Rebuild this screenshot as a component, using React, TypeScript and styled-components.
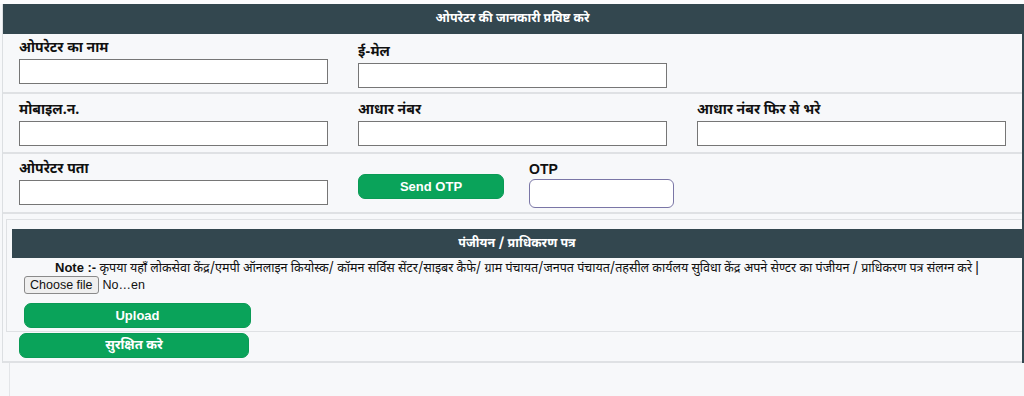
import React from "react";
import styled, { createGlobalStyle } from "styled-components";

const Global = createGlobalStyle`
  html, body { margin: 0; padding: 0; }
  body {
    background: #f7f8fa;
    font-family: "Noto Sans Devanagari", "Liberation Sans", "Noto Sans", sans-serif;
    color: #111;
  }
`;

const Page = styled.div`
  border-top: 4px solid #fcfcfd;
  min-height: 392px;
  display: flex;
  flex-direction: column;
`;

const Wrapper = styled.div`
  margin-left: 2px;
  border-left: 1px solid #dcdfe2;
  border-right: 2px solid #33474f;
  box-sizing: border-box;
  width: 1022px;
`;

const Header = styled.div<{ $h?: number }>`
  height: ${(p) => p.$h ?? 30}px;
  background: #33474f;
  color: #fff;
  font-weight: 700;
  font-size: 12.5px;
  display: flex;
  align-items: center;
  justify-content: center;
`;

const Row = styled.div<{ $cols?: string }>`
  display: grid;
  grid-template-columns: ${(p) => p.$cols ?? "339px 339px 1fr"};
  align-items: start;
  padding: 5px 0 8px 16px;
  border-bottom: 2px solid #dfe1e4;
`;

const Field = styled.div<{ $shift?: number }>`
  display: flex;
  flex-direction: column;
  padding-top: ${(p) => p.$shift ?? 0}px;
  margin-bottom: ${(p) => -(p.$shift ?? 0)}px;
`;

const Label = styled.label<{ $latin?: boolean }>`
  font-size: 14px;
  font-weight: 700;
  line-height: 20px;
  font-family: ${(p) =>
    p.$latin
      ? `"Liberation Sans", Arial, sans-serif`
      : `"Noto Sans Devanagari", "Liberation Sans", sans-serif`};
  color: #111;
`;

const TextInput = styled.input`
  width: 309px;
  height: 25px;
  box-sizing: border-box;
  border: 1px solid #767676;
  background: #fff;
  margin: 0;
  padding: 2px 4px;
`;

const OtpInput = styled.input`
  width: 145px;
  height: 29px;
  box-sizing: border-box;
  border: 1px solid #7a76a6;
  border-radius: 6px;
  background: #fff;
  margin: 0 0 -4px 0;
`;

const GreenButton = styled.button<{ $w: number; $mt?: number }>`
  width: ${(p) => p.$w}px;
  height: 25px;
  margin-top: ${(p) => p.$mt ?? 0}px;
  background: #0aa35a;
  color: #fff;
  border: 1px solid #0a9a55;
  border-radius: 7px;
  font-family: "Liberation Sans", "Noto Sans Devanagari", Arial, sans-serif;
  font-weight: 700;
  font-size: 13px;
  cursor: pointer;
  padding: 0;
`;

const Section = styled.div`
  padding: 5px 0 3px 3px;
  border-bottom: 2px solid #dfe1e4;
  display: flex;
  flex-direction: column;
  align-items: flex-start;
`;

const Box = styled.div`
  align-self: stretch;
  border: 1px solid #dfe1e4;
  border-right: none;
  padding: 9px 0 3px 5px;
  display: flex;
  flex-direction: column;
`;

const Note = styled.div`
  text-align: center;
  font-size: 12.5px;
  line-height: 16px;
  height: 16px;
  margin-top: 1px;
  color: #111;
  b {
    font-family: "Liberation Sans", Arial, sans-serif;
    font-weight: 700;
    font-size: 13px;
  }
`;

const Bar = styled.span`
  font-family: "Liberation Sans", Arial, sans-serif;
  color: #111;
  font-size: 14px;
`;

const BoxBody = styled.div`
  padding-left: 12px;
  display: flex;
  flex-direction: column;
  align-items: flex-start;
`;

const FileRow = styled.div`
  display: flex;
  align-items: center;
  gap: 4px;
  font-family: "Liberation Sans", Arial, sans-serif;
  font-size: 12.5px;
  height: 19px;
  color: #111;
`;

const FileButton = styled.label`
  display: inline-flex;
  align-items: center;
  height: 18px;
  box-sizing: border-box;
  padding: 0 5px;
  background: #efefef;
  border: 1px solid #8a8a8a;
  border-radius: 3px;
  font-size: 12.5px;
  color: #111;
  input { display: none; }
`;

const SaveWrap = styled.div`
  padding: 1px 0 0 13px;
`;

const Filler = styled.div`
  flex: 1;
  margin-left: 9px;
  border-left: 1px solid #e3e5e8;
`;

export default function App() {
  return (
    <>
      <Global />
      <Page>
        <Wrapper>
          <Header>ओपरेटर की जानकारी प्रविष्ट करे</Header>
          <Row>
            <Field>
              <Label>ओपरेटर का नाम</Label>
              <TextInput type="text" />
            </Field>
            <Field $shift={4}>
              <Label>ई-मेल</Label>
              <TextInput type="text" />
            </Field>
          </Row>
          <Row>
            <Field $shift={2}>
              <Label>मोबाइल.न.</Label>
              <TextInput type="text" />
            </Field>
            <Field $shift={2}>
              <Label>आधार नंबर</Label>
              <TextInput type="text" />
            </Field>
            <Field $shift={2}>
              <Label>आधार नंबर फिर से भरे</Label>
              <TextInput type="text" />
            </Field>
          </Row>
          <Row $cols="339px 171px 1fr">
            <Field $shift={1}>
              <Label>ओपरेटर पता</Label>
              <TextInput type="text" />
            </Field>
            <Field>
              <GreenButton $w={146} $mt={15}>Send OTP</GreenButton>
            </Field>
            <Field>
              <Label $latin>OTP</Label>
              <OtpInput type="text" />
            </Field>
          </Row>
          <Section>
            <Box>
              <Header $h={29}>पंजीयन / प्राधिकरण पत्र</Header>
              <Note>
                <b>Note :-</b> कृपया यहाँ लोकसेवा केंद्र/एमपी ऑनलाइन कियोस्क/ कॉमन सर्विस सेंटर/साइबर कैफे/ ग्राम पंचायत/जनपत पंचायत/तहसील कार्यलय सुविधा केंद्र अपने सेण्टर का पंजीयन / प्राधिकरण पत्र संलग्न करे <Bar>|</Bar>
              </Note>
              <BoxBody>
                <FileRow>
                  <FileButton>
                    Choose file
                    <input type="file" />
                  </FileButton>
                  <span>No…en</span>
                </FileRow>
                <GreenButton $w={227} $mt={9}>Upload</GreenButton>
              </BoxBody>
            </Box>
            <SaveWrap>
              <GreenButton $w={230}>सुरक्षित करे</GreenButton>
            </SaveWrap>
          </Section>
        </Wrapper>
        <Filler />
      </Page>
    </>
  );
}
